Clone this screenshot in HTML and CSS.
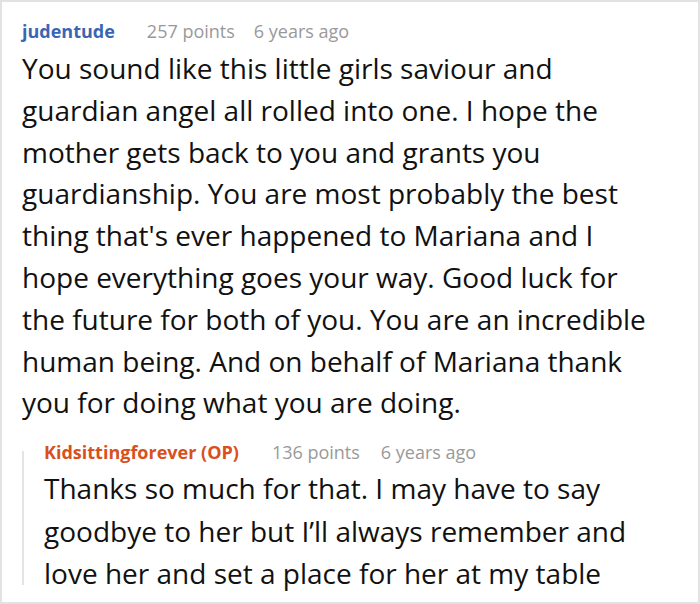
FILE: index.html
```html
<!DOCTYPE html>
<html>
<head>
<meta charset="utf-8">
<link rel="stylesheet" href="styles.css">
</head>
<body>
<div class="frame">
  <div class="comment">
    <div class="meta">
      <span class="author">judentude</span>
      <span class="info">257 points</span>
      <span class="info">6 years ago</span>
    </div>
    <p class="text">You sound like this little girls saviour and guardian angel all rolled into one. I hope the mother gets back to you and grants you guardianship. You are most probably the best thing that's ever happened to Mariana and I hope everything goes your way. Good luck for the future for both of you. You are an incredible human being. And on behalf of Mariana thank you for doing what you are doing.</p>
    <div class="reply">
      <div class="meta reply-meta">
        <span class="author op">Kidsittingforever (OP)</span>
        <span class="info">136 points</span>
        <span class="info">6 years ago</span>
      </div>
      <p class="text">Thanks so much for that. I may have to say goodbye to her but I’ll always remember and love her and set a place for her at my table</p>
    </div>
  </div>
</div>
</body>
</html>
```
FILE: styles.css
```css
html, body { margin: 0; padding: 0; background: #fff; }
.frame {
  width: 700px;
  height: 604px;
  box-sizing: border-box;
  border: 2px solid #e2e2e2;
  overflow: hidden;
  font-family: "Open Sans", "Noto Sans", sans-serif;
  color: #111;
}
.comment { padding: 14px 38px 0 20px; }
.meta { display: flex; gap: 19px; align-items: baseline; font-size: 18px; line-height: 30px; }
.reply-meta { gap: 21px; }
.author { font-weight: bold; color: #3a65b5; margin-right: 13px; }
.author.op { color: #d8501b; margin-right: 12px; }
.info { color: #999; }
.text { margin: 0; font-size: 28px; line-height: 41.8px; }
.comment > .text { margin-top: 2px; }
.reply {
  margin-top: 13px;
  padding-left: 22px;
  background: linear-gradient(#e4e4e4, #e4e4e4) no-repeat 0 14px / 2px 134px;
}
.reply .text { line-height: 42.5px; }
```
